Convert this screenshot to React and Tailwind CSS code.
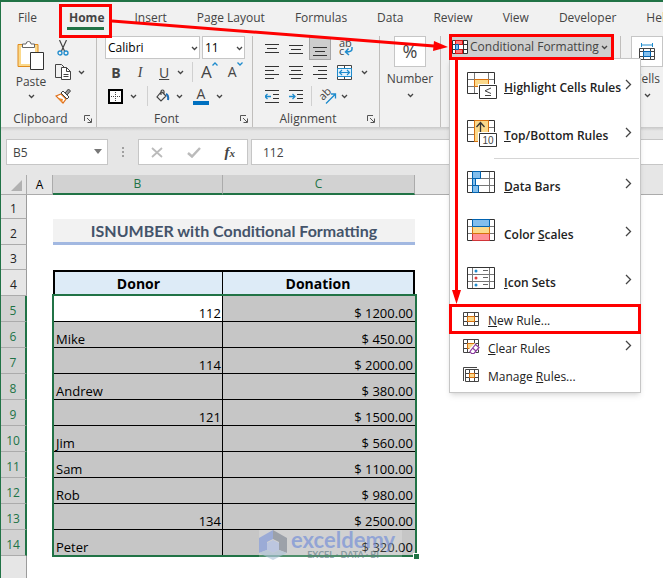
import { useState } from "react";

const tabs = ["File", "Home", "Insert", "Page Layout", "Formulas", "Data", "Review", "View", "Developer", "Help"];

const donors = [
    { row: 5, donor: 112, amount: "1200.00" },
    { row: 6, donor: "Mike", amount: "450.00" },
    { row: 7, donor: 114, amount: "2000.00" },
    { row: 8, donor: "Andrew", amount: "380.00" },
    { row: 9, donor: 121, amount: "1500.00" },
    { row: 10, donor: "Jim", amount: "560.00" },
    { row: 11, donor: "Sam", amount: "1100.00" },
    { row: 12, donor: "Rob", amount: "980.00" },
    { row: 13, donor: 134, amount: "2500.00" },
    { row: 14, donor: "Peter", amount: "320.00" },
];

function Chevron({ className = "" }) {
    return (
        <svg className={`shrink-0 ${className}`} width="7" height="5" viewBox="0 0 7 5" fill="none" stroke="#444" strokeWidth="1.3">
            <path d="M1 1l2.5 2.5L6 1" />
        </svg>
    );
}

function Launcher() {
    return (
        <button aria-label="More options" className="absolute right-1 bottom-1">
            <svg width="8" height="8" viewBox="0 0 8 8" fill="none" stroke="#555">
                <path d="M.5 6V.5H6M3 3l4 4M7.5 3.5v4h-4" />
            </svg>
        </button>
    );
}

/* Horizontal strokes, given as [y, x1, x2] */
function Lines({ rows, children }) {
    return (
        <svg width="15" height="15" viewBox="0 0 15 15" stroke="#333" fill="none" className="shrink-0">
            {rows.map(([y, a, b]) => (
                <path key={y} d={`M${a} ${y}.5H${b}`} />
            ))}
            {children}
        </svg>
    );
}

function SmallGrid({ children, x = 0, y = 0 }) {
    return (
        <g transform={`translate(${x} ${y})`}>
            <path d="M.5 .5h15v13H.5zM4.5 .5v13M11.5 .5v13M.5 4.5h15M.5 9.5h15" fill="#fff" stroke="#444" />
            {children}
        </g>
    );
}

function LargeIcon({ type }) {
    const left = type === "highlight" || type === "top" ? 7 : 5;
    const right = type === "highlight" || type === "top" ? 21 : 22;
    return (
        <svg width="31" height="28" viewBox="0 0 31 28" fill="none" className="shrink-0">
            <path d={`M.5 7.5h27M.5 14.5h27M${left}.5 .5v21M${right}.5 .5v21`} stroke="#777" />
            <path d="M.5 .5h27v21H.5z" stroke="#333" />
            {type === "highlight" && <path d="M7.5 7.5h14v7h-14z" fill="#fbd98b" stroke="#d8700e" />}
            {type === "top" && <path d="M7.5 .5h14v21h-14z" fill="#fbd98b" stroke="#d8700e" />}
            {type === "top" && <path d="M13.5 13V3M9.5 7l4-4.5 4 4.5" stroke="#333" strokeWidth="1.3" />}
            {(type === "highlight" || type === "top") && (
                <>
                    <path d="M11 12h20v16H11z" fill="#fff" />
                    <path d="M12.5 13.5h17v13h-17z" fill="#fff" stroke="#333" />
                </>
            )}
            {type === "highlight" && <path d="M24 16l-6 2.8 6 2.7M18 23.5h6" stroke="#444" />}
            {type === "top" && (
                <text x="21" y="24" textAnchor="middle" fontSize="10" fontWeight="400" fontFamily="Liberation Sans, sans-serif" fill="#444">10</text>
            )}
            {type === "bars" && (
                <path d="M5.5 .5h8v7h-8zM5.5 7.5h3v7h-3zM5.5 14.5h6v7h-6z" fill="#83beec" stroke="#0063b1" />
            )}
            {type === "scales" && (
                <>
                    <path d="M5.5 14.5h17v7h-17z" fill="#ff9196" stroke="#d13438" />
                    <path d="M5.5 7.5h17v7h-17z" fill="#fbd98b" stroke="#d8700e" />
                    <path d="M5.5 .5h17v7h-17z" fill="#83beec" stroke="#0063b1" />
                </>
            )}
            {type === "icons" && (
                <>
                    <circle cx="9" cy="4" r="1.5" fill="#1e8bcd" />
                    <circle cx="9" cy="11" r="1.5" fill="#e03c3c" />
                    <circle cx="9" cy="18" r="1.5" fill="#1e8bcd" />
                    <path d="M16 3.5h5M16 10.5h5M16 17.5h5" stroke="#666" />
                </>
            )}
        </svg>
    );
}

function SmallIcon({ type }) {
    const cell = <path d="M4.5 4.5h7v5h-7z" fill="#fbd98b" stroke="#d8700e" />;
    return (
        <svg width="17" height="16" viewBox="0 0 17 16" fill="none" className="shrink-0">
            {type === "new" && <SmallGrid y={1}>{cell}</SmallGrid>}
            {type === "clear" && (
                <SmallGrid>
                    {cell}
                    <path d="M12 4l5 5-7 7-5-5z" fill="#fff" />
                    <path d="M12.5 5.5l3.500 3-5 6h-2.500l-1.500-2zM9.500 9l3.500 3" fill="#fff" stroke="#8a3a9e" strokeWidth="1.2" />
                </SmallGrid>
            )}
            {type === "manage" && (
                <>
                    <path d="M.5 14V.5H14" stroke="#444" />
                    <path d="M2.500 2.500h13v12h-13zM6.500 2.500v12M11.500 2.500v12M2.500 6.500h13M2.500 10.500h13" fill="#fff" stroke="#444" />
                    <path d="M6.500 6.500h5v4h-5z" fill="#fbd98b" stroke="#d8700e" />
                </>
            )}
        </svg>
    );
}

function MenuChevron() {
    return (
        <svg className="ml-auto mr-2 mb-1 shrink-0" width="7" height="11" viewBox="0 0 7 11" fill="none" stroke="#444" strokeWidth="1.3">
            <path d="M1 1l4.500 4.500L1 10" />
        </svg>
    );
}

function BigItem({ type, children }) {
    return (
        <button role="menuitem" className="flex h-12 w-full items-center pl-[17px] text-left font-semibold">
            <LargeIcon type={type} />
            <span className="ml-1.5 pt-1 whitespace-nowrap">{children}</span>
            <MenuChevron />
        </button>
    );
}

function SmallItem({ type, arrow, marked, children }) {
    return (
        <button role="menuitem" className="relative flex h-7 w-full items-center pl-[13px] text-left">
            <SmallIcon type={type} />
            <span className="ml-2 pt-1 whitespace-nowrap">{children}</span>
            {arrow && <MenuChevron />}
            {marked && <span className="absolute -inset-x-px -inset-y-px border-3 border-[#fe0000]" />}
        </button>
    );
}

function Menu() {
    return (
        <div role="menu" className="absolute top-6 left-0 z-20 w-48 border border-[#c6c6c6] bg-white pt-[3px] pb-[3px] text-[12px] text-[#222] shadow-md">
            <BigItem type="highlight"><u>H</u>ighlight Cells Rules</BigItem>
            <BigItem type="top"><u>T</u>op/Bottom Rules</BigItem>
            <div className="mr-px mb-0.5 ml-11 h-px bg-[#d5d5d5]" />
            <BigItem type="bars"><u>D</u>ata Bars</BigItem>
            <BigItem type="scales">Color <u>S</u>cales</BigItem>
            <BigItem type="icons"><u>I</u>con Sets</BigItem>
            <SmallItem type="new" marked><u>N</u>ew Rule...</SmallItem>
            <SmallItem type="clear" arrow><u>C</u>lear Rules</SmallItem>
            <SmallItem type="manage">Manage <u>R</u>ules...</SmallItem>
            <svg className="absolute top-0 left-0.5 pointer-events-none" width="9" height="245" viewBox="0 0 9 245">
                <path d="M3 0h3v231h3l-4.500 14-4.500-14h3z" fill="#fe0000" />
            </svg>
        </div>
    );
}

function Group({ label, className, launcher, children }) {
    return (
        <section className={`relative shrink-0 border-r border-[#c0bebc] ${className}`}>
            <div className="h-[72px]">{children}</div>
            <div className={`flex h-[19px] items-end justify-center leading-4 ${launcher ? "pr-4" : ""}`}>{label}</div>
            {launcher && <Launcher />}
        </section>
    );
}

function Ribbon() {
    const [font, setFont] = useState("Calibri");
    const [size, setSize] = useState("11");

    return (
        <div className="flex pt-0.5 text-[#444]">
            <Group label="Clipboard" className="w-24" launcher>
                <div className="ml-3.5 flex">
                    <button className="flex w-8 flex-col items-center pt-1">
                        <svg width="28" height="30" viewBox="0 0 28 30" fill="none">
                            <path d="M1 4.500h20v22H1z" fill="#fbd98b" stroke="#e08b1c" />
                            <path d="M4 7h14v17H4z" fill="#fff" />
                            <path d="M5.500 7.500V4h3.500a2.500 2.500 0 015 0h3.500v3.500z" fill="#fff" stroke="#666" />
                            <path d="M13.500 12.500h13v17h-13z" fill="#fff" stroke="#333" />
                        </svg>
                        <span className="mt-1 leading-4">Paste</span>
                        <Chevron className="mt-1" />
                    </button>
                    <div className="ml-2 flex flex-col">
                        <button aria-label="Cut" className="flex h-6 items-center pl-0.5">
                            <svg width="12" height="16" viewBox="0 0 12 16" fill="none">
                                <path d="M2.500 0l5 11M9.500 0l-5 11" stroke="#444" strokeWidth="1.200" />
                                <circle cx="3" cy="13" r="2" stroke="#1e8bcd" strokeWidth="1.300" />
                                <circle cx="9" cy="13" r="2" stroke="#1e8bcd" strokeWidth="1.300" />
                            </svg>
                        </button>
                        <button aria-label="Copy" className="flex h-6 items-center gap-1.5">
                            <svg width="17" height="16" viewBox="0 0 17 16" fill="none" stroke="#444">
                                <path d="M6 13.500H.5V.5h6l3 3" />
                                <path d="M6.500 3.500h5l4 4v8h-9z" fill="#fff" />
                                <path d="M11.500 3.500v4h4M8.500 10.500h5M8.500 12.500h5" />
                            </svg>
                            <Chevron />
                        </button>
                        <button aria-label="Format Painter" className="flex h-6 items-center">
                            <svg width="17" height="16" viewBox="0 0 17 16" fill="none">
                                <path d="M1 8l5-2 5 5-3 4z" fill="#fff" stroke="#e0701a" strokeWidth="1.200" />
                                <path d="M3 10l5 1-1 3.500z" fill="#f08b2c" />
                                <path d="M6 5l2-2 6 6-2 2z" fill="#fff" stroke="#444" />
                                <path d="M10 5l3.500-4 2 2-3.500 4z" fill="#999" stroke="#444" />
                            </svg>
                        </button>
                    </div>
                </div>
            </Group>

            <Group label="Font" className="w-[156px]" launcher>
                <div className="flex h-6 items-start gap-0.5 pl-2">
                    <div className="relative w-[95px]">
                        <input aria-label="Font" value={font} onChange={(e) => setFont(e.target.value)} className="h-[23px] w-full border border-[#c6c6c6] bg-white pl-0.5 text-black" />
                        <Chevron className="absolute top-2.5 right-0.5" />
                    </div>
                    <div className="relative w-[43px]">
                        <input aria-label="Font size" value={size} onChange={(e) => setSize(e.target.value)} className="h-[23px] w-full border border-[#c6c6c6] bg-white pl-0.5 text-black" />
                        <Chevron className="absolute top-2.5 right-0.5" />
                    </div>
                </div>
                <div className="flex h-6 items-center pl-3.5 text-[14px]">
                    <button className="w-2.5 font-bold">B</button>
                    <button className="ml-3.5 w-2.5 font-[Liberation_Serif,serif] italic">I</button>
                    <button className="ml-3.5 w-2.5 underline">U</button>
                    <Chevron className="ml-2" />
                    <span className="ml-2 h-5 w-px bg-[#d0d0d0]" />
                    <button aria-label="Grow font" className="ml-2 flex items-start text-[17px] leading-5">
                        A
                        <svg width="6" height="4" viewBox="0 0 6 4" fill="none" stroke="#1e8bcd" strokeWidth="1.300"><path d="M.5 3.500L3 1l2.500 2.500" /></svg>
                    </button>
                    <button aria-label="Shrink font" className="ml-2.5 flex items-start leading-5">
                        A
                        <svg width="6" height="4" viewBox="0 0 6 4" fill="none" stroke="#1e8bcd" strokeWidth="1.300"><path d="M.5 .5L3 3 5.500 .5" /></svg>
                    </button>
                </div>
                <div className="flex h-6 items-center pl-[11px]">
                    <button aria-label="Borders">
                        <svg width="15" height="15" viewBox="0 0 15 15" fill="none">
                            <path d="M1 1h13v13H1z" fill="#fff" stroke="#000" strokeWidth="2" />
                            <path d="M7.500 3v9M3 7.500h9" stroke="#444" strokeDasharray="1 1" />
                        </svg>
                    </button>
                    <Chevron className="ml-[7px]" />
                    <span className="ml-2.5 h-5 w-px bg-[#d0d0d0]" />
                    <button aria-label="Fill color" className="ml-2">
                        <svg width="14" height="14" viewBox="0 0 14 14" fill="none">
                            <path d="M5 3L1 8l4 4 5-5-4-4zM5 6V2.500a1.500 1.500 0 013 0V6" stroke="#444" strokeWidth="1.200" />
                            <path d="M10 5c2.500 1 2.500 3 2 6" stroke="#1e6fb8" strokeWidth="2" />
                        </svg>
                    </button>
                    <Chevron className="ml-1.5" />
                    <button aria-label="Font color" className="ml-2.5 w-4 border-b-4 border-[#0070c0] text-center text-[14px] leading-[14px]">A</button>
                    <Chevron className="ml-[7px]" />
                </div>
            </Group>

            <Group label="Alignment" className="w-[127px]" launcher>
                <div className="flex h-6 items-center pl-3">
                    <Lines rows={[[3, 0, 14], [7, 2, 12], [11, 0, 14]]} />
                    <span className="w-[9px]" />
                    <Lines rows={[[4, 0, 14], [8, 2, 12], [12, 0, 14]]} />
                    <button aria-label="Bottom align" className="ml-[5px] flex h-[23px] w-[22px] items-end justify-center border border-[#a5a5a5] bg-[#cdcdcd] pb-0.5">
                        <Lines rows={[[5, 0, 14], [9, 2, 12], [13, 0, 14]]} />
                    </button>
                    <button aria-label="Wrap text" className="ml-2">
                        <svg width="16" height="20" viewBox="0 0 16 20" fill="none" fontFamily="Open Sans, sans-serif" fontSize="11" overflow="visible">
                            <text x="0" y="9" fill="#444">ab</text>
                            <text x="0" y="17" fill="#444">c</text>
                            <path d="M13 9v2q0 3-6 3M9.500 10.500L6.500 14l3.500 3" stroke="#1e8bcd" strokeWidth="1.500" />
                        </svg>
                    </button>
                </div>
                <div className="flex h-6 items-center gap-[9px] pl-3">
                    <Lines rows={[[1, 0, 14], [5, 0, 9], [9, 0, 14], [13, 0, 9]]} />
                    <Lines rows={[[1, 0, 14], [5, 2, 12], [9, 0, 14], [13, 2, 12]]} />
                    <Lines rows={[[1, 0, 14], [5, 5, 14], [9, 0, 14], [13, 5, 14]]} />
                    <svg width="15" height="15" viewBox="0 0 15 15" fill="none" className="shrink-0">
                        <path d="M.5 .5h14v14H.5zM7.500 0v15" fill="#fff" stroke="#444" />
                        <path d="M.5 3.500h14v8H.5z" fill="#e3f1fb" stroke="#1e8bcd" />
                        <path d="M3 7.500h9M5 5L2.500 7.500 5 10M10 5l2.500 2.500L10 10" stroke="#1e8bcd" strokeWidth="1.200" />
                    </svg>
                    <Chevron />
                </div>
                <div className="flex h-6 items-center pl-3">
                    <Lines rows={[[1, 0, 14], [5, 8, 14], [9, 8, 14], [13, 0, 14]]}>
                        <path d="M0 7.500h6M2.500 5L0 7.500 2.500 10" stroke="#1e8bcd" strokeWidth="1.300" />
                    </Lines>
                    <span className="w-[9px]" />
                    <Lines rows={[[1, 0, 14], [5, 8, 14], [9, 8, 14], [13, 0, 14]]}>
                        <path d="M0 7.500h6M3.500 5L6 7.500 3.500 10" stroke="#1e8bcd" strokeWidth="1.300" />
                    </Lines>
                    <span className="ml-[7px] h-5 w-px bg-[#d0d0d0]" />
                    <button aria-label="Orientation" className="ml-2">
                        <svg width="17" height="17" viewBox="0 0 17 17" fill="none" overflow="visible">
                            <text x="0" y="10" transform="rotate(-45 5 8)" fontSize="11" fontFamily="Open Sans, sans-serif" fill="#444">ab</text>
                            <path d="M6 15.500L15.500 6M11 6h4.500v4.500" stroke="#1e8bcd" strokeWidth="1.300" />
                        </svg>
                    </button>
                    <Chevron className="ml-1" />
                </div>
            </Group>

            <Group className="w-[61px]">
                <button className="flex w-full flex-col items-center">
                    <span className="flex h-[31px] w-8 items-center justify-center border border-[#c6c6c6] bg-white text-[18px]">%</span>
                    <span className="mt-1 leading-4">Number</span>
                    <Chevron className="mt-1.5" />
                </button>
            </Group>

            <Group className="w-[180px]">
                <div className="relative -mt-0.5 ml-2 w-[165px]">
                    <button aria-haspopup="menu" aria-expanded="true" className="relative z-30 flex h-[26px] w-full items-center border-3 border-[#fe0000] bg-[#cfcfcf] whitespace-nowrap">
                        <svg width="16" height="14" viewBox="0 0 16 14" fill="none" className="shrink-0">
                            <path d="M.5 .5h15v13H.5zM3.500 .5v13M11.500 .5v13M.5 4.500h15M.5 9.500h15" fill="#fff" stroke="#333" />
                            <path d="M3.500 .5h7v4h-7zM3.500 9.500h7v4h-7z" fill="#ff7b7b" stroke="#d11" />
                            <path d="M3.500 4.500h3v5h-3z" fill="#83beec" stroke="#0063b1" />
                        </svg>
                        <span className="ml-0.5">Conditional Formatting</span>
                        <Chevron className="ml-0.5" />
                    </button>
                    <Menu />
                </div>
            </Group>

            <Group className="w-16">
                <button className="ml-2.5 flex flex-col items-center">
                    <span className="flex h-[31px] w-8 items-center justify-center border border-[#c6c6c6] bg-white">
                        <svg width="16" height="17" viewBox="0 0 16 17" fill="none">
                            <path d="M.5 5.500h15v11H.5zM4.500 5v12M11.500 5v12M0 8.500h16M0 13.500h16" stroke="#444" />
                            <path d="M4.500 8.500h7v5h-7z" fill="#83beec" stroke="#0063b1" />
                            <path d="M2.500 0v4M13.500 0v4M3 2h10" stroke="#1e8bcd" />
                        </svg>
                    </span>
                    <span className="mt-1 leading-4">Cells</span>
                    <Chevron className="mt-1.5" />
                </button>
            </Group>
        </div>
    );
}

function FormulaBar() {
    return (
        <div className="flex bg-[#e6e6e6] pt-2 pb-2.5 pl-[5px] text-[#444]">
            <div className="relative w-[102px] shrink-0">
                <input aria-label="Name box" defaultValue="B5" className="h-[26px] w-full border border-[#c6c6c6] bg-white pl-1.5" />
                <svg className="absolute top-2.5 right-1.5" width="8" height="5" viewBox="0 0 8 5"><path d="M0 0h8L4 5z" fill="#777" /></svg>
            </div>
            <svg className="mt-2 ml-3.5 shrink-0" width="3" height="11" viewBox="0 0 3 11" fill="#a0a0a0">
                <path d="M0 0h2v2H0zM0 4h2v2H0zM0 8h2v2H0z" />
            </svg>
            <div className="ml-[13px] flex h-[26px] w-[110px] shrink-0 items-center justify-between border border-[#c6c6c6] bg-white px-3">
                <button aria-label="Cancel">
                    <svg width="12" height="11" viewBox="0 0 12 11" stroke="#bbb" strokeWidth="1.800"><path d="M1 1l10 9M11 1L1 10" /></svg>
                </button>
                <button aria-label="Enter">
                    <svg width="14" height="11" viewBox="0 0 14 11" fill="none" stroke="#bbb" strokeWidth="2.500"><path d="M1 6l4 3.500L13 1" /></svg>
                </button>
                <button aria-label="Insert function" className="font-[Liberation_Serif,serif] text-[15px] font-bold italic">
                    f<span className="text-[11px]">x</span>
                </button>
            </div>
            <input aria-label="Formula bar" defaultValue="112" className="ml-[3px] h-[26px] min-w-0 flex-1 border border-r-0 border-[#c6c6c6] bg-white pl-[11px] text-[12px]" />
        </div>
    );
}

function RowHead({ n, selected }) {
    return (
        <th
            scope="row"
            className={`border-b border-b-[#ababab] pt-1 text-center text-[12px] font-normal leading-4 ${
                selected ? "border-r-2 border-r-[#217346] bg-[#d2d2d2] text-[#217346]" : "border-r border-r-[#9b9b9b] bg-[#e6e6e6] text-[#222]"
            }`}
        >
            {n}
        </th>
    );
}

function Watermark() {
    return (
        <span className="absolute top-0 left-9 z-20 flex h-[30px] w-[143px] items-center gap-1 bg-white/30 opacity-70">
            <svg width="28" height="30" viewBox="0 0 28 30" className="shrink-0">
                <path d="M0 8L14 0v9l-6 3v8l-8 3z" fill="#8aa0de" />
                <path d="M14 0l14 8v15l-8-3v-8l-6-3z" fill="#8b929e" />
                <path d="M8 13l6-3 6 3v7l-6 3-6-3z" fill="#b9c6ea" />
                <path d="M0 23l8-3 6 3 6-3 8 3-14 7z" fill="#b5c9dc" />
            </svg>
            <span className="flex flex-col items-center font-[Lato,sans-serif] font-bold text-[#7d97dc]">
                <span className="text-[22px] leading-5">exceldemy</span>
                <span className="text-[9px] leading-2.5 text-[#6e8790]">EXCEL · DATA · BI</span>
            </span>
        </span>
    );
}

function Sheet() {
    return (
        <div className="flex flex-1 flex-col bg-white text-[13px] text-black">
            <table className="w-full table-fixed border-separate border-spacing-0">
                <colgroup>
                    <col className="w-[26px]" />
                    <col className="w-[26px]" />
                    <col className="w-[170px]" />
                    <col className="w-[192px]" />
                    <col />
                </colgroup>
                <thead>
                    <tr className="h-5 bg-[#e6e6e6] text-[12px] leading-4">
                        <th className="border-r border-b border-[#ababab]">
                            <svg className="mt-0.5 ml-auto mr-1" width="11" height="11" viewBox="0 0 11 11"><path d="M11 0v11H0z" fill="#b1b1b1" /></svg>
                        </th>
                        <th className="border-r border-b border-[#ababab] font-normal">A</th>
                        <th className="border-r border-b-2 border-r-[#ababab] border-b-[#217346] bg-[#d2d2d2] font-normal text-[#217346]">B</th>
                        <th className="border-r border-b-2 border-r-[#ababab] border-b-[#217346] bg-[#d2d2d2] font-normal text-[#217346]">C</th>
                        <th className="border-b border-[#ababab]" />
                    </tr>
                </thead>
                <tbody>
                    <tr className="h-6">
                        <RowHead n={1} />
                        <td colSpan={4} />
                    </tr>
                    <tr className="h-[26px]">
                        <RowHead n={2} />
                        <td />
                        <td colSpan={2} className="border-b-3 border-[#a2b8e1] bg-[#f2f2f2] text-center font-[Lato,sans-serif] text-[16px] leading-5 font-bold text-[#44546a]">
                            ISNUMBER with Conditional Formatting
                        </td>
                        <td />
                    </tr>
                    <tr className="h-[25px]">
                        <RowHead n={3} />
                        <td colSpan={4} />
                    </tr>
                    <tr className="h-[26px] text-[14px] leading-5">
                        <RowHead n={4} />
                        <td />
                        <th className="border-t-2 border-r border-l-2 border-black bg-[#ddebf7] font-bold">Donor</th>
                        <th className="border-t-2 border-r-2 border-black bg-[#ddebf7] font-bold">Donation</th>
                        <td />
                    </tr>
                    {donors.map(({ row, donor, amount }, i) => (
                        <tr key={row} className="h-[26px] leading-4">
                            <RowHead n={row} selected />
                            <td />
                            <td
                                className={`relative border-r border-b border-black pt-2 pr-px pl-[3px] ${i === 0 ? "bg-white" : "bg-[#c6c6c6]"} ${
                                    typeof donor === "number" ? "text-right" : "text-left"
                                }`}
                            >
                                {donor}
                                {i === 0 && (
                                    <span className="pointer-events-none absolute -top-0.5 -left-px z-10 h-[263px] w-[365px] border-2 border-[#217346]">
                                        <span className="absolute -right-1 -bottom-1 size-1.5 border-t border-l border-white bg-[#217346]" />
                                    </span>
                                )}
                            </td>
                            <td className="relative border-b border-black bg-[#c6c6c6] pt-2 pr-0.5 text-right">
                                $ {amount}
                                {row === 14 && <Watermark />}
                            </td>
                            <td />
                        </tr>
                    ))}
                </tbody>
            </table>
            <div className="w-[26px] flex-1 border-r border-[#9b9b9b] bg-[#e6e6e6]" />
        </div>
    );
}

export default function App() {
    return (
        <div className="flex min-h-screen flex-col overflow-hidden border-t-2 border-l border-[#217346] bg-[#f1f1f1] font-[Open_Sans,Noto_Sans,sans-serif] text-[12px]">
            <nav className="flex h-8 gap-[30px] pl-[17px] whitespace-nowrap text-[#444]">
                {tabs.map((tab) => (
                    <button key={tab} className={`relative flex h-full items-center ${tab === "Home" ? "pl-0.5 font-bold" : ""}`}>
                        {tab}
                        {tab === "Home" && (
                            <>
                                <span className="absolute inset-x-0 bottom-1 h-[3px] bg-[#217346]" />
                                <span className="absolute -inset-x-2 top-0.5 -bottom-1 z-10 border-3 border-[#fe0000]" />
                                <svg className="pointer-events-none absolute top-4 left-full z-40 ml-2" width="336" height="38" viewBox="0 0 336 38">
                                    <path d="M0 3l322 25" stroke="#fe0000" strokeWidth="3" />
                                    <path d="M322 23l14 6-15 4z" fill="#fe0000" />
                                </svg>
                            </>
                        )}
                    </button>
                ))}
            </nav>
            <Ribbon />
            <div className="h-1 bg-linear-to-b from-[#c8c8c8] to-[#e6e6e6]" />
            <FormulaBar />
            <Sheet />
        </div>
    );
}
